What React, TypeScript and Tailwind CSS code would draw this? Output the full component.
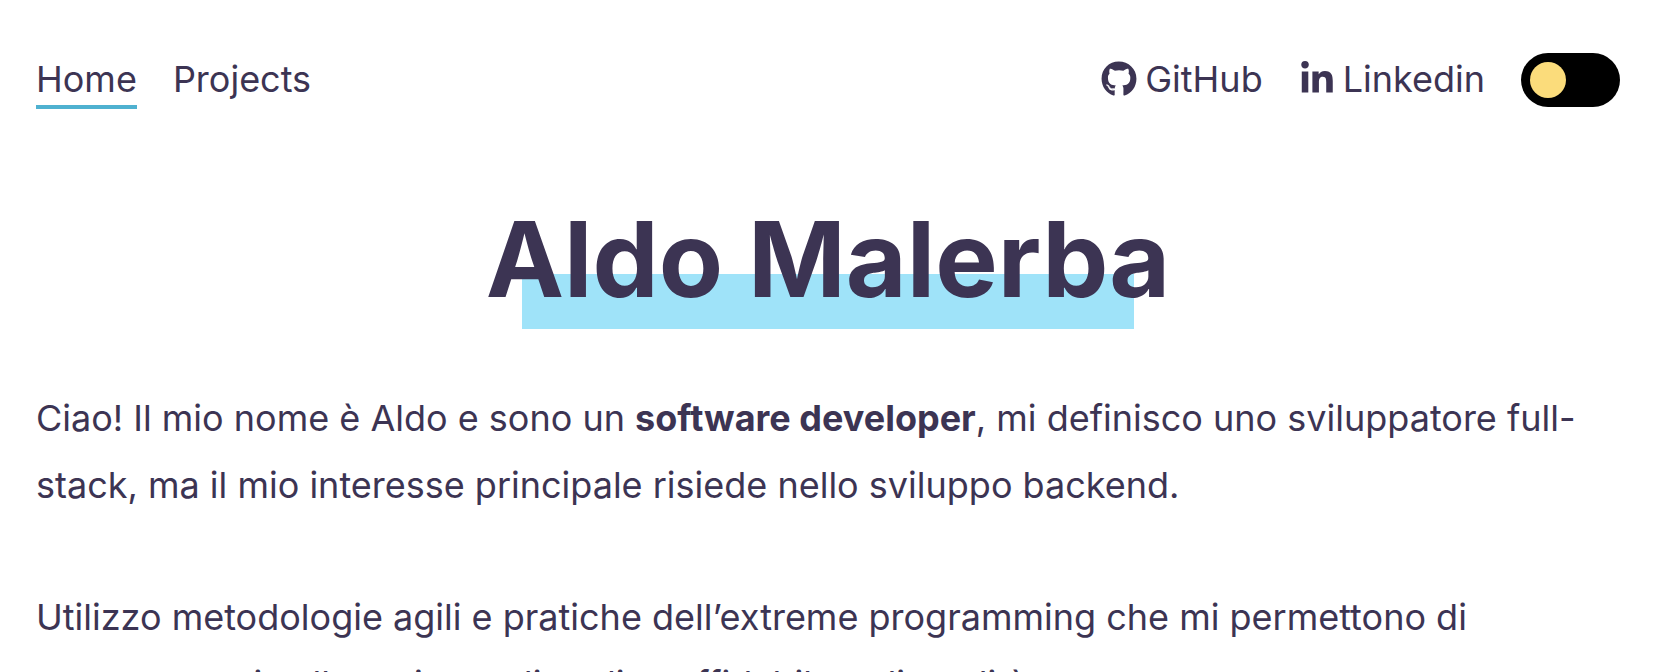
import { useState } from "react";
import { FaGithub, FaLinkedinIn } from "react-icons/fa";

export default function App() {
  const [dark, setDark] = useState(false);
  return (
    <div className="h-screen overflow-hidden bg-white pr-[42px] pl-9 font-['Inter',sans-serif] text-4xl text-[#3c3453]">
      <nav className="flex items-start justify-between pt-[53px]">
        <div className="flex gap-9">
          <a href="#home" className="border-b-4 border-[#4fb1d0] leading-[52px]">Home</a>
          <a href="#projects" className="leading-[52px]">Projects</a>
        </div>
        <div className="flex items-start gap-9">
          <a href="#github" className="flex items-center gap-2 leading-[52px]">
            <FaGithub aria-hidden="true" />
            GitHub
          </a>
          <a href="#linkedin" className="flex items-center gap-2 leading-[52px]">
            <FaLinkedinIn aria-hidden="true" />
            Linkedin
          </a>
          <button
            type="button"
            role="switch"
            aria-checked={dark}
            aria-label="Tema scuro"
            onClick={() => setDark(!dark)}
            className="flex h-[54px] w-[99px] items-center rounded-full bg-black px-[9px]"
          >
            <span className="size-9 rounded-full bg-[#fbdc7b]" />
          </button>
        </div>
      </nav>
      <header className="mt-[90px] flex justify-center">
        <h1 className="relative isolate text-[105px] leading-[120px] font-bold">
          <span className="absolute inset-x-9 top-[75px] -z-10 h-[55px] bg-[#9fe3f9]" />
          Aldo Malerba
        </h1>
      </header>
      <main className="mt-[66px] leading-[67px]">
        <p>
          Ciao! Il mio nome è Aldo e sono un <strong>software developer</strong>, mi definisco uno sviluppatore full-stack, ma il mio interesse principale risiede nello sviluppo backend.
        </p>
        <p className="mt-[65px]">
          Utilizzo metodologie agili e pratiche dell’extreme programming che mi permettono di concentrarmi sulla scrittura di codice affidabile e di qualità
        </p>
      </main>
    </div>
  );
}
